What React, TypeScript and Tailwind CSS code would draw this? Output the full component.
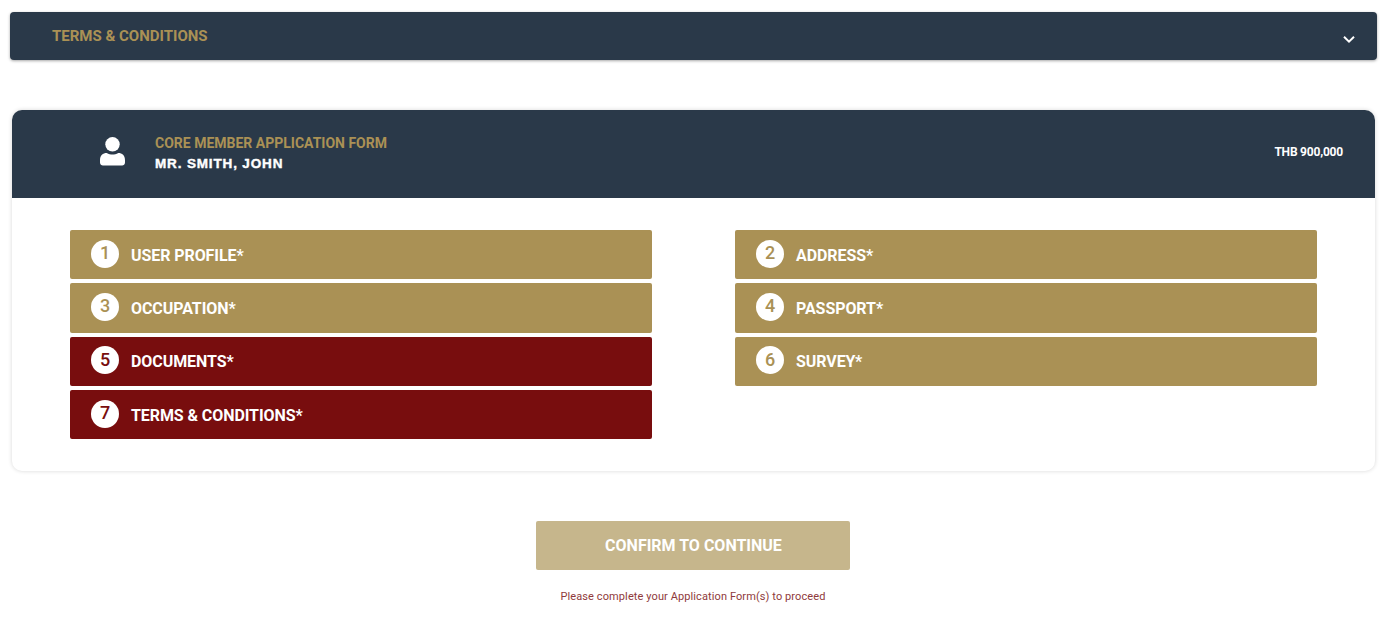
const forms = [
  { num: 1, label: 'USER PROFILE*', done: true },
  { num: 2, label: 'ADDRESS*', done: true },
  { num: 3, label: 'OCCUPATION*', done: true },
  { num: 4, label: 'PASSPORT*', done: true },
  { num: 5, label: 'DOCUMENTS*', done: false },
  { num: 6, label: 'SURVEY*', done: true },
  { num: 7, label: 'TERMS & CONDITIONS*', done: false },
];

function FormRow({ num, label, done }: { num: number; label: string; done: boolean }) {
  return (
    <div className={`flex h-[49.33px] items-center rounded-[2px] pl-[21px] text-white ${done ? 'bg-[#aa9155]' : 'bg-[#780d0e]'}`}>
      <span className={`flex h-[28px] w-[28px] -translate-y-[1px] items-center justify-center rounded-full bg-white pb-[2px] text-[18px] font-medium ${done ? 'text-[#aa9155]' : 'text-[#780d0e]'}`}>
        {num}
      </span>
      <span className="ml-[12px] translate-y-[1px] text-[16px] font-bold tracking-[-0.08px]">{label}</span>
    </div>
  );
}

export default function App() {
  return (
    <div className="min-h-[623px] bg-white pt-[12px] font-['Roboto',sans-serif]">
      <div className="ml-[10px] mr-[16px] flex h-[48px] items-center justify-between rounded-[4px] bg-[#2a3949] pl-[42px] pr-[21px] shadow-[0_1px_3px_rgba(0,0,0,0.35)]">
        <span className="text-[15px] font-bold text-[#aa9155]">TERMS &amp; CONDITIONS</span>
        <svg width="14" height="9" viewBox="0 0 14 9" fill="none" className="translate-y-[3px]">
          <path d="M2 1.8 7 6.600 12 1.800" stroke="#fff" strokeWidth="2" />
        </svg>
      </div>

      <div className="ml-[12px] mr-[18px] mt-[50px] rounded-[10px] bg-white shadow-[0_0_4px_rgba(0,0,0,0.16)]">
        <div className="flex h-[88px] items-center justify-between rounded-t-[10px] bg-[#2a3949] pl-[88px] pr-[32px]">
          <div className="flex items-center">
            <svg width="25" height="29" viewBox="0 0 26 30" fill="#fff" className="-translate-y-[3px]">
              <circle cx="13" cy="7.500" r="7.500" />
              <path d="M0 24c0-5 3-7.500 7-7.500 2 1 4 1.600 6 1.600s4-.6 6-1.600c4 0 7 2.500 7 7.500v2.500c0 2-1.500 3-3 3H3c-1.500 0-3-1-3-3z" />
            </svg>
            <div className="ml-[30px] flex flex-col">
              <span className="-translate-y-[1px] text-[14px] font-bold leading-[20px] text-[#aa9155]">CORE MEMBER APPLICATION FORM</span>
              <span className="text-[13.5px] font-bold leading-[20px] tracking-[0.85px] text-white [-webkit-text-stroke:0.4px_#fff] font-['Liberation_Sans',sans-serif]">MR. SMITH, JOHN</span>
            </div>
          </div>
          <span className="-translate-y-[2px] text-[12px] font-bold tracking-[-0.2px] text-white">THB 900,000</span>
        </div>
        <div className="grid grid-cols-[582px_582px] justify-between gap-y-[4px] px-[58px] pb-[32px] pt-[32px]">
          {forms.map((f) => (
            <FormRow key={f.num} {...f} />
          ))}
        </div>
      </div>

      <div className="mt-[50px] flex flex-col items-center pr-[8px]">
        <button className="h-[49px] w-[314px] rounded-[2px] bg-[#c6b68c] pl-[2px] text-[16px] font-bold text-white">
          CONFIRM TO CONTINUE
        </button>
        <p className="mt-[20px] pl-[1px] text-[11px] leading-[14px] tracking-[0.1px] text-[#8f3a3b]">
          Please complete your Application Form(s) to proceed
        </p>
      </div>
    </div>
  );
}
